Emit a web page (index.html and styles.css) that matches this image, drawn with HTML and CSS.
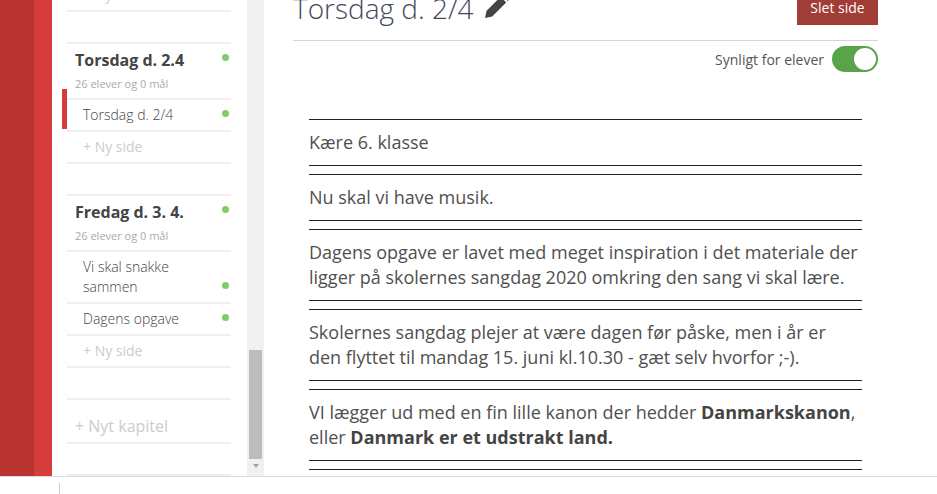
FILE: index.html
```html
<!DOCTYPE html>
<html lang="da">
<head>
<meta charset="utf-8">
<title>Torsdag d. 2/4</title>
<link rel="stylesheet" href="styles.css">
</head>
<body>
<div class="app">
  <div class="rail-dark"></div>
  <div class="rail-light"></div>
  <aside class="side">
    <div class="side-list">
      <section class="chapter chapter-top">
        <div class="row row-add">+ Ny side</div>
      </section>
      <section class="chapter">
        <div class="chapter-head">
          <div class="chapter-title">Torsdag d. 2.4 <span class="dot dot-title"></span></div>
          <div class="chapter-sub">26 elever og 0 mål</div>
        </div>
        <div class="row row-active">Torsdag d. 2/4<span class="dot dot-row"></span></div>
        <div class="row row-add">+ Ny side</div>
      </section>
      <section class="chapter">
        <div class="chapter-head">
          <div class="chapter-title">Fredag d. 3. 4. <span class="dot dot-title"></span></div>
          <div class="chapter-sub">26 elever og 0 mål</div>
        </div>
        <div class="row">Vi skal snakke sammen<span class="dot dot-row dot-low"></span></div>
        <div class="row">Dagens opgave<span class="dot dot-row"></span></div>
        <div class="row row-add">+ Ny side</div>
      </section>
      <section class="chapter">
        <div class="new-chapter">+ Nyt kapitel</div>
      </section>
      <section class="chapter"></section>
    </div>
  </aside>
  <div class="scrollbar">
    <div class="thumb"></div>
    <div class="arrow"></div>
  </div>
  <main class="main">
    <header class="head">
      <h1 class="title">Torsdag d. 2/4
        <svg class="pencil" viewBox="0 0 24 24" aria-hidden="true"><path d="M0 24l1.6-7.2L15.6 2.8l5.6 5.6L7.2 22.4zM17 1.4L18.2.2c.3-.3.8-.3 1.1 0l4.5 4.5c.3.3.3.8 0 1.1L22.6 7z"/></svg>
      </h1>
      <button class="delete">Slet side</button>
    </header>
    <div class="visible">
      <span>Synligt for elever</span>
      <span class="toggle"><span class="knob"></span></span>
    </div>
    <div class="content">
      <p class="para">Kære 6. klasse</p>
      <p class="para">Nu skal vi have musik.</p>
      <p class="para">Dagens opgave er lavet med meget inspiration i det materiale der ligger på skolernes sangdag 2020 omkring den sang vi skal lære.</p>
      <p class="para">Skolernes sangdag plejer at være dagen før påske, men i år er den flyttet til mandag 15. juni kl.10.30 - gæt selv hvorfor ;-).</p>
      <p class="para">VI lægger ud med en fin lille kanon der hedder <b>Danmarkskanon</b>, eller <b>Danmark er et udstrakt land.</b></p>
      <p class="para"></p>
    </div>
  </main>
</div>
<footer class="foot"><span class="foot-tick"></span></footer>
</body>
</html>
```
FILE: styles.css
```css
* { box-sizing: border-box; }
html, body { margin: 0; padding: 0; height: 100%; overflow: hidden; background: #fff; }
body { font-family: "Open Sans", sans-serif; color: #444; display: flex; flex-direction: column; height: 494px; }
.app { display: flex; height: 476px; overflow: hidden; }
.rail-dark { width: 34px; background: #b93333; flex: none; }
.rail-light { width: 18px; background: #d73c3c; flex: none; }
.side { width: 195px; flex: none; overflow: hidden; padding: 0 16px 0 15px; position: relative; }
.side-list { margin-top: -20px; }
.chapter { border-top: 2px solid #efefef; margin-bottom: 30px; }
.chapter-top { border-top: 0; }
.chapter-head { padding: 0 8px; height: 56px; border-bottom: 2px solid #efefef; }
.chapter-title { font-size: 16px; font-weight: 700; line-height: 22px; padding-top: 5px; color: #444; position: relative; box-sizing: content-box; height: 22px; }
.chapter-sub { font-size: 11px; line-height: 14px; color: #aaa; margin-top: 6px; }
.row { position: relative; font-size: 14px; font-weight: 300; line-height: 20px; padding: 5px 30px 5px 16px; border-bottom: 2px solid #efefef; color: #444; }
.row-add { color: #ccc; font-weight: 400; }
.row-active::before { content: ""; position: absolute; left: -5px; top: -11px; width: 5px; height: 40px; background: #d73c3c; }
.dot { position: absolute; width: 7px; height: 7px; border-radius: 50%; background: #82c96e; right: 2px; }
.dot-title { top: 10px; right: -6px; }
.dot-row { top: 10px; }
.dot-low { top: 30px; }
.new-chapter { font-size: 16px; color: #ccc; line-height: 22px; padding: 15px 8px 0; border-bottom: 2px solid #efefef; height: 44px; }
.scrollbar { width: 17px; flex: none; background: #f1f1f1; padding: 0 2px; position: relative; }
.thumb { width: 13px; height: 109px; margin-top: 350px; background: #bdbdbd; }
.arrow { margin: 5px auto 0; width: 0; height: 0; border: 3.5px solid transparent; border-top: 4px solid #a3a3a3; border-bottom: 0; }
.main { flex: 1; padding: 0 59px 0 29px; overflow: hidden; }
.head { height: 41px; display: flex; justify-content: space-between; align-items: flex-start; border-bottom: 1px solid #d5d5d5; }
.title { margin: -12px 0 0; font-size: 28px; font-weight: 300; line-height: 40px; color: #44495c; white-space: nowrap; height: 40px; display: flex; align-items: center; gap: 12px; }
.pencil { width: 24px; height: 24px; fill: #444; flex: none; position: relative; top: -2px; }
.delete { margin-top: -10px; width: 81px; height: 35px; padding: 0; border: 0; background: #a13c37; color: #fff; font: 400 14px/20px "Open Sans", sans-serif; }
.visible { display: flex; justify-content: flex-end; align-items: center; gap: 8px; margin-top: 5px; height: 26px; font-size: 14px; color: #555; }
.toggle { width: 46px; height: 26px; border-radius: 13px; background: #59a44a; display: block; position: relative; }
.knob { position: absolute; right: 2px; top: 2px; width: 22px; height: 22px; border-radius: 50%; background: #fff; }
.content { margin: 47px 16px 0; }
.para { margin: 0 0 8px; padding: 10px 0; border-top: 1px solid #222; border-bottom: 1px solid #222; font-size: 18px; line-height: 25px; color: #505050; }
.para b { font-weight: 700; color: #444; }
.foot { height: 18px; flex: none; border-top: 1px solid #dcdce0; background: #fff; padding-left: 59px; padding-top: 6px; }
.foot-tick { display: block; width: 1px; height: 11px; background: #ccc; }
```
